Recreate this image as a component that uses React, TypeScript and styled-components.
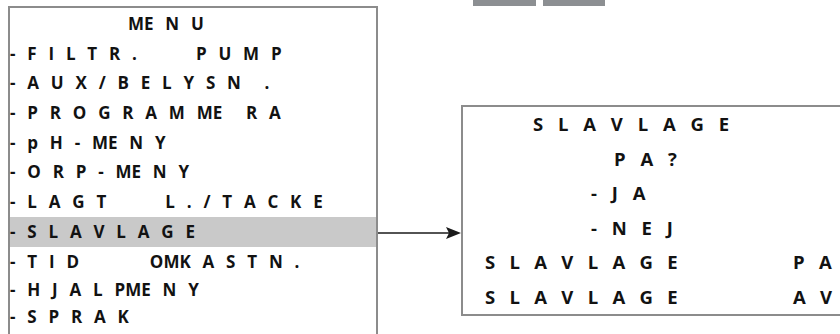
import React from "react";
import styled, { createGlobalStyle } from "styled-components";

const Global = createGlobalStyle`
  html, body {
    margin: 0;
    padding: 0;
    background: #ffffff;
    width: 840px;
    height: 334px;
    overflow: hidden;
  }
  body {
    font-family: "Open Sans", "Liberation Sans", Arial, sans-serif;
    color: #121212;
  }
`;

const Page = styled.div`
  display: flex;
  align-items: flex-start;
  width: 840px;
  height: 334px;
  padding-left: 8px;
  box-sizing: border-box;
  overflow: hidden;
`;

const MenuPanel = styled.div`
  flex: 0 0 370px;
  height: 340px;
  margin-top: 6px;
  box-sizing: border-box;
  border: 2px solid #8c8c8c;
  background: #ffffff;
  display: grid;
  grid-template-rows: 31px 29px 28.5px 31px 30px 28px 31px 30px 29px 27.5px 27.5px;
  align-content: start;
`;

const MenuLine = styled.div<{ $active?: boolean; $indent?: number }>`
  display: flex;
  align-items: center;
  padding-left: ${(p) => p.$indent ?? 0}px;
  background: ${(p) => (p.$active ? "#c9c9c9" : "transparent")};
  font-size: 17px;
  font-weight: 700;
  line-height: 1;
  white-space: pre;
  word-spacing: 7.4px;
`;

const Connector = styled.svg`
  flex: 0 0 83px;
  height: 16px;
  margin-top: 225px;
  display: block;
`;

const RightColumn = styled.div`
  flex: 0 0 420px;
  display: flex;
  flex-direction: column;
`;

const TabBars = styled.div`
  display: flex;
  gap: 7px;
  padding-left: 12px;
  height: 6px;
`;

const TabBar = styled.div<{ $w: number }>`
  width: ${(p) => p.$w}px;
  height: 6px;
  background: #8c8f92;
`;

const ResultPanel = styled.div`
  margin-top: 99px;
  height: 211px;
  box-sizing: border-box;
  border: 2px solid #8c8c8c;
  border-right: none;
  background: #ffffff;
  display: grid;
  grid-template-rows: repeat(6, 34.5px);
  padding-left: 22px;
`;

const ResultLine = styled.div<{ $indent?: number }>`
  display: flex;
  align-items: center;
  padding-left: ${(p) => p.$indent ?? 0}px;
  font-size: 18.5px;
  font-weight: 700;
  line-height: 1;
  white-space: pre;
  word-spacing: 10px;
`;

const StatusRow = styled.div`
  display: grid;
  grid-template-columns: 308px auto;
  align-items: center;
  font-size: 18.5px;
  font-weight: 700;
  line-height: 1;
  white-space: pre;
  word-spacing: 9.5px;
`;

const menuItems = [
  "- F I L T R .     P U M P",
  "- A U X / B E L Y S N  .",
  "- P R O G R A M ME  R A",
  "- p H - ME N Y",
  "- O R P - ME N Y",
  "- L A G T     L . / T A C K E",
  "- S L A V L A G E",
  "- T I D      OMK A S T N .",
  "- H J A L PME N Y",
  "- S P R A K",
];

const ACTIVE = 6;

export default function App() {
  return (
    <>
      <Global />
      <Page>
        <MenuPanel>
          <MenuLine $indent={118}>ME N U</MenuLine>
          {menuItems.map((t, i) => (
            <MenuLine key={i} $active={i === ACTIVE}>
              {t}
            </MenuLine>
          ))}
        </MenuPanel>
        <Connector viewBox="0 0 83 16">
          <line x1="0" y1="8" x2="72" y2="8" stroke="#1a1a1a" strokeWidth="1.6" />
          <polygon points="83,8 68,2 71,8 68,14" fill="#1a1a1a" />
        </Connector>
        <RightColumn>
          <TabBars>
            <TabBar $w={63} />
            <TabBar $w={62} />
          </TabBars>
          <ResultPanel>
            <ResultLine $indent={48}>S L A V L A G E</ResultLine>
            <ResultLine $indent={129}>P A ?</ResultLine>
            <ResultLine $indent={106}>- J A</ResultLine>
            <ResultLine $indent={106}>- N E J</ResultLine>
            <StatusRow>
              <span>S L A V L A G E</span>
              <span>P A</span>
            </StatusRow>
            <StatusRow>
              <span>S L A V L A G E</span>
              <span>A V</span>
            </StatusRow>
          </ResultPanel>
        </RightColumn>
      </Page>
    </>
  );
}
